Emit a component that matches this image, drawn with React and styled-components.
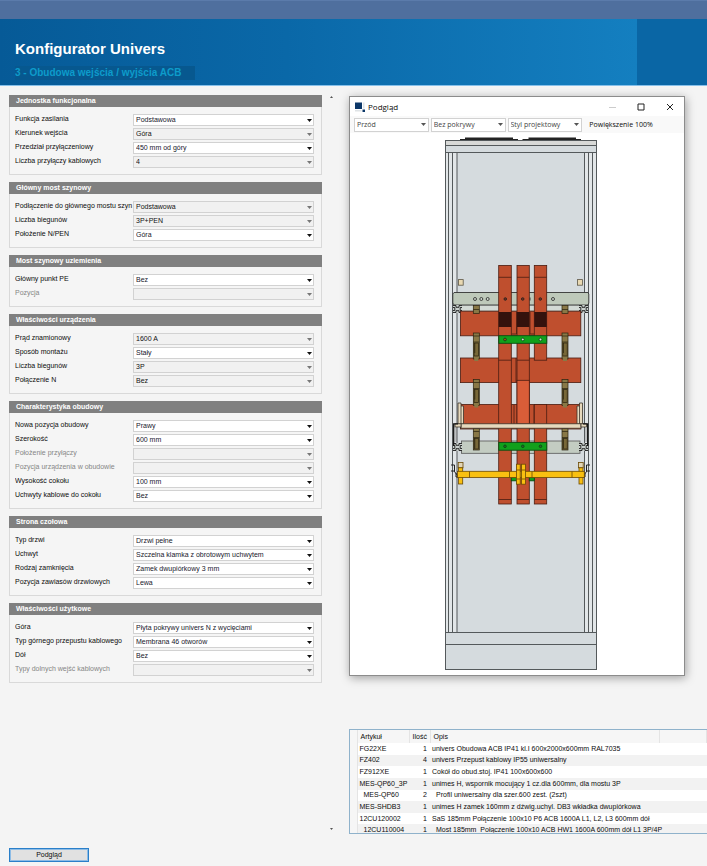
import React, { useId } from "react";
import styled, { createGlobalStyle } from "styled-components";

const GlobalStyle = createGlobalStyle`
  *, *::before, *::after { box-sizing: border-box; }
  body {
    margin: 0;
    background: #f4f4f4;
    color: #0c0c0c;
    font-family: "Liberation Sans", Arial, sans-serif;
    font-size: 7px;
  }
  button, select { font: inherit; color: inherit; }
`;

const Page = styled.div`
  display: flex;
  flex-direction: column;
  min-height: 100vh;
`;

const TopStrip = styled.div`
  height: 19px;
  background: #4f6f9e;
  border-top: 1px solid #5b7bab;
`;

const Banner = styled.header`
  display: flex;
  border-bottom: 1px solid #86c0ea;
  color: #fff;
`;

const BannerMain = styled.div`
  flex: 1;
  padding: 20px 15px 5px;
  background: linear-gradient(90deg, #065a97 0%, #0a68a8 45%, #147fc0 100%);
`;

const BannerSide = styled.div`
  width: 70px;
  background: #0a66a5;
`;

const Title = styled.h1`
  margin: 0;
  font-size: 15px;
  line-height: 20px;
`;

const Subtitle = styled.p`
  display: inline-block;
  margin: 7px 0 0;
  padding-right: 14px;
  background: #07588f;
  color: #0d9ccb;
  font-size: 10px;
  font-weight: bold;
  line-height: 14px;
`;

const Content = styled.main`
  flex: 1;
  display: grid;
  grid-template-columns: minmax(0, 313fr) 27px minmax(0, 358fr);
  padding: 9px 0 0 9px;
`;

const Panels = styled.form`
  display: flex;
  flex-direction: column;
  gap: 7px;
`;

const Panel = styled.section`
  border: 1px solid #d9d9d9;
  border-top: 0;
  border-radius: 1px;
  background: #f5f5f5;
`;

const PanelTitle = styled.h2`
  margin: 0 -1px;
  padding-left: 7px;
  background: #808080;
  color: #fff;
  font-size: 7px;
  line-height: 12px;
`;

const PanelBody = styled.div`
  display: grid;
  gap: 2px;
  padding: 7px 7px 6px 5px;
`;

const Field = styled.div`
  display: grid;
  grid-template-columns: 118px minmax(0, 1fr);
  height: 12px;
`;

const FieldLabel = styled.label`
  overflow: hidden;
  white-space: nowrap;
  line-height: 10px;
  color: ${(p) => (p.$muted ? "#858585" : "#0c0c0c")};
`;

const SelectBox = styled.span`
  display: grid;
  align-items: center;
  > * { grid-area: 1 / 1; }
  > svg { justify-self: end; margin-right: ${(p) => (p.$tool ? 3 : 2)}px; pointer-events: none; }
`;

const Select = styled.select`
  appearance: none;
  width: 100%;
  height: 12px;
  padding: 0 10px 0 2px;
  border: 1px solid #d2d2d2;
  border-radius: 0;
  background: #fff;
  color: #17172c;
  line-height: 10px;
  &:disabled { background: #f1f1f1; color: #111; opacity: 1; }
`;

const ToolSelect = styled(Select)`
  height: 14px;
  padding: 0 10px 0 2px;
  color: #444;
  line-height: 12px;
`;

const Rail = styled.div`
  display: flex;
  flex-direction: column;
  justify-content: space-between;
  align-items: center;
  height: 736px;
  padding-right: 8px;
`;

const RailButton = styled.button`
  display: flex;
  padding: 1px;
  border: 0;
  background: none;
`;

const Right = styled.div`
  display: flex;
  flex-direction: column;
  gap: 53px;
  padding-top: 1px;
`;

const Window = styled.section`
  margin-right: 22px;
  border: 1px solid #8c8c8c;
  background: #fff;
  box-shadow: 1px 2px 9px rgba(0, 0, 0, 0.35);
  font-family: "Open Sans", "Segoe UI", sans-serif;
`;

const WindowBar = styled.div`
  display: flex;
  align-items: center;
  gap: 3px;
  height: 19px;
  padding: 0 10px 0 5px;
`;

const WindowTitle = styled.h2`
  flex: 1;
  margin: 0;
  font-size: 8px;
  font-weight: normal;
`;

const WindowButtons = styled.div`
  display: flex;
  gap: 21px;
`;

const WindowButton = styled.button`
  display: flex;
  padding: 0;
  border: 0;
  background: none;
`;

const ToolBar = styled.div`
  display: grid;
  grid-template-columns: repeat(3, minmax(0, 75fr)) minmax(0, 98fr);
  align-items: center;
  gap: 2px;
  height: 17px;
  padding: 0 2px 0 4px;
  background: #f9f9f9;
  font-size: 7px;
`;

const Zoom = styled.span`
  padding-left: 5px;
  white-space: nowrap;
`;

const Drawing = styled.div`
  display: flex;
  justify-content: center;
  > svg { display: block; }
`;

const TableFrame = styled.div`
  height: 105px;
  overflow: hidden;
  border: 1px solid #8fb2cb;
  border-right: 0;
  background: #fff;
`;

const Table = styled.table`
  width: 100%;
  height: 106px;
  border-collapse: collapse;
  table-layout: fixed;
  line-height: 10px;
  white-space: pre;
  th, td { padding: 0; text-align: left; font-weight: normal; }
  thead tr { height: 13px; background: #f6f6f6; }
  thead th { padding-left: 3px; border-right: 1px solid #e4e4e4; }
  tbody tr:nth-child(even) { background: #f2f2f2; }
  td:first-child { background: #f6f6f6; border-right: 1px solid #e4e4e4; }
`;

const Col = styled.col`
  width: ${(p) => p.$width};
`;

const TextCell = styled.td`
  &&& { padding-left: ${(p) => (p.$child ? 6 : 2)}px; }
`;

const CountCell = styled.td`
  &&& { padding-right: 3px; text-align: right; }
`;

const Footer = styled.footer`
  padding: 0 9px 4px;
`;

const PreviewButton = styled.button`
  display: block;
  width: 80px;
  height: 14px;
  padding: 0;
  border: 1px solid #2a7fc9;
  outline: 1px solid #8dbce6;
  outline-offset: -2px;
  background: #e1e1e1;
  line-height: 12px;
`;

const panels = [
  ["Jednostka funkcjonalna", [
    ["Funkcja zasilania", "Podstawowa"],
    ["Kierunek wejścia", "Góra", true],
    ["Przedział przyłączeniowy", "450 mm od góry"],
    ["Liczba przyłączy kablowych", "4", true],
  ]],
  ["Główny most szynowy", [
    ["Podłączenie do głównego mostu szyn", "Podstawowa", true],
    ["Liczba biegunów", "3P+PEN", true],
    ["Położenie N/PEN", "Góra"],
  ]],
  ["Most szynowy uziemienia", [
    ["Główny punkt PE", "Bez"],
    ["Pozycja", "", true],
  ]],
  ["Właściwości urządzenia", [
    ["Prąd znamionowy", "1600 A", true],
    ["Sposób montażu", "Stały"],
    ["Liczba biegunów", "3P", true],
    ["Połączenie N", "Bez", true],
  ]],
  ["Charakterystyka obudowy", [
    ["Nowa pozycja obudowy", "Prawy"],
    ["Szerokość", "600 mm"],
    ["Położenie przyłączy", "", true],
    ["Pozycja urządzenia w obudowie", "", true],
    ["Wysokość cokołu", "100 mm"],
    ["Uchwyty kablowe do cokołu", "Bez"],
  ]],
  ["Strona czołowa", [
    ["Typ drzwi", "Drzwi pełne"],
    ["Uchwyt", "Szczelna klamka z obrotowym uchwytem"],
    ["Rodzaj zamknięcia", "Zamek dwupiórkowy 3 mm"],
    ["Pozycja zawiasów drzwiowych", "Lewa"],
  ]],
  ["Właściwości użytkowe", [
    ["Góra", "Płyta pokrywy univers N z wycięciami"],
    ["Typ górnego przepustu kablowego", "Membrana 46 otworów"],
    ["Dół", "Bez"],
    ["Typy dolnych wejść kablowych", "", true],
  ]],
];

const articles = [
  ["FG22XE", 1, "univers Obudowa ACB IP41 kl.I 600x2000x600mm RAL7035"],
  ["FZ402", 4, "univers Przepust kablowy IP55 uniwersalny"],
  ["FZ912XE", 1, "Cokół do obud.stoj. IP41 100x600x600"],
  ["MES-QP60_3P", 1, "unimes H, wspornik mocujący 1 cz.dla 600mm, dla mostu 3P"],
  ["MES-QP60", 2, "Profil uniwersalny dla szer.600 zest. (2szt)", true],
  ["MES-SHDB3", 1, "unimes H zamek 160mm z dźwig.uchyl. DB3 wkładka dwupiórkowa"],
  ["12CU120002", 1, "SaS 185mm Połączenie 100x10 P6 ACB 1600A L1, L2, L3 600mm dół"],
  ["12CU110004", 1, "Most 185mm  Połączenie 100x10 ACB HW1 1600A 600mm dół L1 3P/4P", true],
];

function Arrow({ color = "#111" }) {
  return (
    <svg width="5" height="3" viewBox="0 0 5 3" aria-hidden="true">
      <path d="M0 0h5L2.500 3z" fill={color} />
    </svg>
  );
}

function SelectField({ label, value, disabled }) {
  const id = useId();
  return (
    <Field>
      <FieldLabel htmlFor={id} $muted={!value}>{label}</FieldLabel>
      <SelectBox>
        <Select id={id} disabled={disabled} defaultValue={value}>
          <option>{value}</option>
        </Select>
        <Arrow color={disabled ? "#777" : "#111"} />
      </SelectBox>
    </Field>
  );
}

function ToolChoice({ label, value }) {
  return (
    <SelectBox $tool>
      <ToolSelect aria-label={label} defaultValue={value}>
        <option>{value}</option>
      </ToolSelect>
      <Arrow color="#555" />
    </SelectBox>
  );
}

const R = ({ x1, y1, x2, y2, ...rest }) => (
  <rect x={x1} y={y1} width={x2 - x1} height={y2 - y1} {...rest} />
);

const copper = "#bf4f2e";
const columns = [[498.7, 511.3], [517, 529.3], [534.3, 546.7]];

function Corner({ x, y }) {
  return (
    <g transform={`translate(${x} ${y})`}>
      <path d="M-4.500-4h9v8h-9z" fill="#c9d0cd" />
      <path d="M-4.500-3.500h3v1.800h3v-1.800h3M-4.500 3.500h3V1.700h3v1.800h3M-4.500-1.500h1.800v3h-1.800M4.500-1.500H2.700v3h1.800" fill="none" stroke="#1b1b1b" strokeWidth=".9" />
    </g>
  );
}

function Clip({ x, y1, y2, inner = true }) {
  return (
    <g stroke="#29220f" strokeWidth=".7">
      <R x1={x} y1={y1} x2={x + 6} y2={y2} fill="#897846" />
      {inner && <R x1={x + 0.8} y1={y1 + 10} x2={x + 5.2} y2={Math.min(y1 + 23, y2 - 1)} fill="#786838" />}
      {inner && <path d={`M${x} ${y1 + 3}h6M${x} ${y1 + 9}h6M${x + 1.5} ${y1 + 10}v10`} fill="none" />}
    </g>
  );
}

function Cabinet() {
  return (
    <svg width="168" height="542" viewBox="433 133 168 542" role="img" aria-label="Widok szafy z przodu">
      <path d="M460 140v-1h5v-1.500h48v1.500h5V140zM522.500 140v-1h6v-1.500h47.500v1.500h5V140z" fill="#222" />
      <g stroke="#54595b" strokeWidth="1">
        <R x1={445.5} y1={140.5} x2={596.5} y2={669.5} fill="#d5dbde" />
        <R x1={445.5} y1={152.5} x2={457} y2={632.5} fill="#e2e6e8" />
        <R x1={584.5} y1={152.5} x2={596.5} y2={632.5} fill="#e2e6e8" />
        <R x1={445.5} y1={140.5} x2={596.5} y2={145.5} fill="#d8d9d7" />
        <path d="M445.500 152.500h151M448.500 152.500v480M452.500 152.500v480M588.500 152.500v480M592.500 152.500v480M445.500 632.500h151M445.500 644.500h151" fill="none" />
      </g>
      <g fill="#e9d9b2" stroke="#5c5545" strokeWidth=".8">
        <R x1={458.4} y1={279.6} x2={463.2} y2={285.2} />
        <R x1={577.4} y1={279.6} x2={582.4} y2={285.2} />
      </g>

      <R x1={461} y1={305} x2={580} y2={311} fill="#d3dad5" stroke="#777" strokeWidth=".6" />
      <path d="M454 292.500h134l.8 1.500v9l-.8 2H454l-1.200-2v-9z" fill="#bec9ba" stroke="#333" strokeWidth=".9" />
      <R x1={461.5} y1={441} x2={580} y2={453.3} fill="#c3ccc2" stroke="#555" strokeWidth=".8" />
      <Corner x={457.5} y={309} />
      <Corner x={583.5} y={309} />
      <Corner x={457.5} y={447} />
      <Corner x={583.5} y={447} />

      <g fill={copper} stroke="#4a1d12" strokeWidth=".8">
        <R x1={460.4} y1={311.2} x2={580.8} y2={335.8} />
        <R x1={460.4} y1={358} x2={580.8} y2={382.6} />
        <R x1={460.4} y1={404.4} x2={580.8} y2={429} />
        <path d="M511.500 334h5V312M530 312v22h4M516 358v24M514 405v23M534 405v23" fill="none" />
        <R x1={498.7} y1={265.4} x2={511.3} y2={504} />
        <R x1={517} y1={265.4} x2={529.3} y2={504} />
        <R x1={534.3} y1={265.4} x2={546.7} y2={360.2} />
        <R x1={534.3} y1={404.4} x2={546.7} y2={504} />
        {columns.map(([a, b]) => (
          <path key={a} d={`M${a} 277.300H${b}M${a} 499.500H${b}`} fill="none" />
        ))}
        <R x1={517} y1={380.3} x2={529.3} y2={424} fill="#d95d38" />
        <path d="M498.700 360.200h12.600M517 360.200h12.300" />
      </g>
      <g fill="#34120d">
        {columns.map(([a, b]) => (
          <R key={a} x1={a} y1={312} x2={b} y2={327} />
        ))}
      </g>
      <g fill="none" stroke="#222" strokeWidth=".8">
        {[475, 481.3, 487.7, 553].map((x) => <circle key={x} cx={x} cy="299" r="1.500" fill="#cfd8ce" />)}
        {[505.3, 522.7, 540.3].map((x) => <circle key={x} cx={x} cy="299" r="1.300" fill="#7a2f1b" />)}
        <path d="M530 297.500v3" />
      </g>

      <g stroke="#0a4b12" strokeWidth=".9" fill="#11a01c">
        <R x1={498.8} y1={335.7} x2={546.8} y2={343.3} />
        <R x1={498.8} y1={442.4} x2={546.8} y2={450.2} />
        <R x1={511.3} y1={477.4} x2={517} y2={480.8} />
        <R x1={529.3} y1={477.4} x2={534.3} y2={480.8} />
        <circle cx="505" cy="339.500" r="1.400" fill="#a44c22" />
        <circle cx="522.800" cy="339.500" r="1.400" fill="#cfe8cf" />
        <circle cx="540.500" cy="339.500" r="1.400" fill="#cfe8cf" />
        {[505, 522.8, 540.5].map((x) => <circle key={x} cx={x} cy="446.300" r="1.300" fill="#256b28" />)}
      </g>

      {[473.3, 562].map((x) => (
        <g key={x}>
          <Clip x={x} y1={305.5} y2={313.5} inner={false} />
          <path d={`M${x} 309.500h6`} stroke="#29220f" strokeWidth=".7" />
          <Clip x={x} y1={333} y2={359} />
          <Clip x={x} y1={379.5} y2={405.5} />
          <Clip x={x} y1={428.5} y2={450} />
          <R x1={x + 1} y1={358} x2={x + 5} y2={361} fill="#897846" />
          <R x1={x + 1} y1={404.5} x2={x + 5} y2={407.5} fill="#897846" />
        </g>
      ))}

      <g fill="#e6d9bd" stroke="#3b332a" strokeWidth=".8">
        <path d="M458 403h3v3h2.500v18H458zM582.500 403h-3v3H577v18h5.500z" />
        <path d="M461 406v18M579.500 406v18" fill="none" />
        <R x1={461} y1={423.8} x2={581} y2={428.2} />
        <R x1={455} y1={423.8} x2={461} y2={427} />
        <R x1={581} y1={423.8} x2={586.5} y2={427} />
      </g>
      <path d="M458 423.800h-4.300V446M583 423.800h4.700V446" fill="none" stroke="#111" strokeWidth="1.300" />
      <path d="M456 428v14M586 428v14" stroke="#777" strokeWidth=".7" />

      <path d="M451 465h3.500v6H451M454 471l4 5M590 465h-3.500v6h3.500M587 471l-4 5M456 473v4h3M585 473v4h-3" fill="none" stroke="#222" strokeWidth="1" />
      <g stroke="#6b4a05" strokeWidth=".8" fill="#f9c011">
        <R x1={458.2} y1={462.4} x2={463} y2={467.8} fill="#e2d6b8" />
        <R x1={578.6} y1={462.4} x2={583.2} y2={467.8} fill="#e2d6b8" />
        <R x1={458.5} y1={467.8} x2={462.7} y2={484} />
        <R x1={579} y1={467.8} x2={583} y2={484} />
        <R x1={457.5} y1={471.3} x2={584.3} y2={477.5} />
        <path d="M469.500 471.500v6M509.500 471.500v6M532 471.500v6M572 471.500v6" />
        <R x1={516.4} y1={464.2} x2={520.2} y2={484.2} />
        <R x1={521.6} y1={464.2} x2={525.4} y2={484.2} />
        <path d="M516.400 470h3.800M521.600 470h3.800M516.400 479h3.800M521.600 479h3.800" />
      </g>
    </svg>
  );
}

export default function App() {
  return (
    <Page>
      <GlobalStyle />
      <TopStrip />
      <Banner>
        <BannerMain>
          <Title>Konfigurator Univers</Title>
          <Subtitle>3 - Obudowa wejścia / wyjścia ACB</Subtitle>
        </BannerMain>
        <BannerSide />
      </Banner>
      <Content>
        <Panels>
          {panels.map(([title, fields]) => (
            <Panel key={title}>
              <PanelTitle>{title}</PanelTitle>
              <PanelBody>
                {fields.map(([label, value, disabled]) => (
                  <SelectField key={label} label={label} value={value} disabled={disabled} />
                ))}
              </PanelBody>
            </Panel>
          ))}
        </Panels>
        <Rail>
          <RailButton type="button" aria-label="W górę">
            <svg width="3" height="2" viewBox="0 0 3 2"><path d="M0 2h3L1.500 0z" fill="#555" /></svg>
          </RailButton>
          <RailButton type="button" aria-label="W dół">
            <svg width="3" height="2" viewBox="0 0 3 2"><path d="M0 0h3L1.500 2z" fill="#555" /></svg>
          </RailButton>
        </Rail>
        <Right>
          <Window>
            <WindowBar>
              <svg width="10" height="10" viewBox="0 0 10 10" aria-hidden="true">
                <path d="M0 .5h7v6.500H0z" fill="#0c3768" />
                <path d="M7.500 7.500h2.500V10H7.500z" fill="#0c3768" />
                <path d="M8 .5h1.500v6H8zM0 8h6.500v1.500H0z" fill="#dfe3e6" />
              </svg>
              <WindowTitle>Podgląd</WindowTitle>
              <WindowButtons>
                <WindowButton type="button" aria-label="Minimalizuj">
                  <svg width="7" height="8" viewBox="0 0 7 8"><path d="M0 4.500h7" stroke="#ccc" /></svg>
                </WindowButton>
                <WindowButton type="button" aria-label="Maksymalizuj">
                  <svg width="8" height="8" viewBox="0 0 8 8"><path d="M1 1h6v6H1z" fill="none" stroke="#222" /></svg>
                </WindowButton>
                <WindowButton type="button" aria-label="Zamknij">
                  <svg width="8" height="8" viewBox="0 0 8 8"><path d="M1 1l6 6M7 1L1 7" stroke="#222" /></svg>
                </WindowButton>
              </WindowButtons>
            </WindowBar>
            <ToolBar>
              <ToolChoice label="Widok" value="Przód" />
              <ToolChoice label="Pokrywa" value="Bez pokrywy" />
              <ToolChoice label="Styl" value="Styl projektowy" />
              <Zoom>Powiększenie 100%</Zoom>
            </ToolBar>
            <Drawing><Cabinet /></Drawing>
          </Window>
          <TableFrame>
            <Table>
              <colgroup>
                <Col $width="7px" />
                <Col $width="52px" />
                <Col $width="21px" />
                <Col $width="229px" />
                <Col $width="auto" />
              </colgroup>
              <thead>
                <tr><th /><th>Artykuł</th><th>Ilość</th><th>Opis</th><th /></tr>
              </thead>
              <tbody>
                {articles.map(([code, count, text, child]) => (
                  <tr key={code}>
                    <td />
                    <TextCell $child={child}>{code}</TextCell>
                    <CountCell>{count}</CountCell>
                    <TextCell $child={child}>{text}</TextCell>
                    <td />
                  </tr>
                ))}
              </tbody>
            </Table>
          </TableFrame>
        </Right>
      </Content>
      <Footer>
        <PreviewButton type="button">Podgląd</PreviewButton>
      </Footer>
    </Page>
  );
}
